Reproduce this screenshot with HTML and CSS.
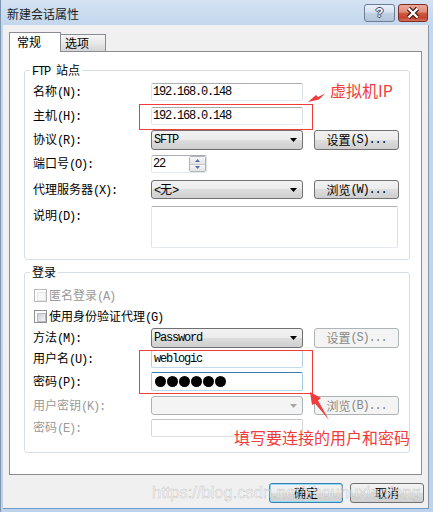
FILE: index.html
```html
<!DOCTYPE html>
<html lang="zh-CN">
<head>
<meta charset="utf-8">
<title>新建会话属性</title>
<link rel="stylesheet" href="styles.css">
</head>
<body>
<div class="window">
  <header class="titlebar">
    <span class="title">新建会话属性</span>
    <div class="caps">
      <span class="cap help">?</span>
      <span class="cap close"><svg width="28" height="16" viewBox="0 0 28 16"><path d="M9.5 3.5 L18.5 12.5 M18.5 3.5 L9.5 12.5" stroke="#4a1a12" stroke-width="4.6"/><path d="M9.5 3.5 L18.5 12.5 M18.5 3.5 L9.5 12.5" stroke="#fff" stroke-width="2.4"/></svg></span>
    </div>
  </header>
  <main class="client">
    <nav class="tabs">
      <span class="tab active">常规</span>
      <span class="tab">选项</span>
    </nav>
    <section class="panel">
      <div class="group g1">
        <div class="legend"><span class="m">FTP </span>站点</div>
        <div class="row h18 mt6"><span class="lbl">名称<span class="m">(N):</span></span><div class="edit w152"><span class="m">192.168.0.148</span></div></div>
        <div class="row h18 mt6"><span class="lbl">主机<span class="m">(H):</span></span><div class="edit w152"><span class="m">192.168.0.148</span></div></div>
        <div class="row h20 mt5"><span class="lbl">协议<span class="m">(R):</span></span><div class="combo"><span class="m">SFTP</span><svg class="arrow" width="7" height="4" viewBox="0 0 7 4"><path d="M0 0h7L3.5 4z"/></svg></div><span class="btn">设置<span class="m">(S)...</span></span></div>
        <div class="row h18 mt5"><span class="lbl">端口号<span class="m">(O):</span></span><div class="edit spinbox"><span class="m">22</span><span class="spin"><i class="half"><svg width="5" height="3" viewBox="0 0 5 3"><path d="M0 3h5L2.5 0z"/></svg></i><i class="half"><svg width="5" height="3" viewBox="0 0 5 3"><path d="M0 0h5L2.5 3z"/></svg></i></span></div></div>
        <div class="row h19 mt7"><span class="lbl">代理服务器<span class="m">(X):</span></span><div class="combo"><span><span class="m">&lt;</span>无<span class="m">&gt;</span></span><svg class="arrow" width="7" height="4" viewBox="0 0 7 4"><path d="M0 0h7L3.5 4z"/></svg></div><span class="btn">浏览<span class="m">(W)...</span></span></div>
        <div class="row h42 mt7 top"><span class="lbl desc">说明<span class="m">(D):</span></span><div class="edit memo"></div></div>
      </div>
      <div class="group g2">
        <div class="legend">登录</div>
        <div class="row h13 mt10"><span class="cb disabled"></span><span class="cbtext dis">匿名登录<span class="m">(A)</span></span></div>
        <div class="row h13 mt8"><span class="cb"></span><span class="cbtext">使用身份验证代理<span class="m">(G)</span></span></div>
        <div class="row h20 mt5"><span class="lbl">方法<span class="m">(M):</span></span><div class="combo"><span class="m">Password</span><svg class="arrow" width="7" height="4" viewBox="0 0 7 4"><path d="M0 0h7L3.5 4z"/></svg></div><span class="btn disabled">设置<span class="m">(S)...</span></span></div>
        <div class="row h18 mt2"><span class="lbl">用户名<span class="m">(U):</span></span><div class="edit w152 hover"><span class="m">weblogic</span></div></div>
        <div class="row h19 mt4"><span class="lbl">密码<span class="m">(P):</span></span><div class="edit w152 focus"><span class="dots"><i></i><i></i><i></i><i></i><i></i><i></i></span></div></div>
        <div class="row h19 mt5"><span class="lbl dis">用户密钥<span class="m">(K):</span></span><div class="combo disabled"><span></span><svg class="arrow" width="7" height="4" viewBox="0 0 7 4"><path d="M0 0h7L3.5 4z"/></svg></div><span class="btn disabled">浏览<span class="m">(B)...</span></span></div>
        <div class="row h18 mt4"><span class="lbl dis">密码<span class="m">(E):</span></span><div class="edit w152 disabled"></div></div>
      </div>
    </section>
    <footer class="actions">
      <span class="dbtn default">确定</span>
      <span class="dbtn">取消</span>
    </footer>
  </main>
  <svg class="anno" width="433" height="512" viewBox="0 0 433 512">
    <rect x="139.5" y="104.5" width="173" height="25" fill="none" stroke="#f03c3c" stroke-width="1"/>
    <rect x="139.5" y="350.5" width="173" height="43" fill="none" stroke="#f03c3c" stroke-width="1"/>
    <polygon points="308,102 316,95 318,97 325,93.5 319,99.5" fill="#f03c3c"/>
    <polygon points="310,392 321,398 318,400.5 329,420 315,403.5 312,405" fill="#f03c3c"/>
  </svg>
  <div class="note n1">虚拟机IP</div>
  <div class="note n2">填写要连接的用户和密码</div>
  <div class="wm">https://blog.csdn.net/zhouhuxiaofeng</div>
</div>
</body>
</html>
```

FILE: styles.css
```css
* { box-sizing: border-box; margin: 0; padding: 0; }
html, body { width: 433px; height: 512px; overflow: hidden; }
body {
  font-family: "Noto Sans CJK SC", "Liberation Sans", sans-serif;
  font-size: 12px;
  line-height: 14px;
  color: #000;
  background: #c2d6ec;
}
.m {
  font-family: "Liberation Mono", "Noto Sans CJK SC", monospace;
  font-size: 12px;
  letter-spacing: -1.2px;
}
.window {
  position: relative;
  width: 433px;
  height: 512px;
  display: flex;
  flex-direction: column;
  box-shadow: inset 1px 0 0 #7f95b0;
  background: linear-gradient(180deg, #d5e3f3 0, #c3d7ed 24px, #bed3eb 100%);
}
/* title bar */
.titlebar {
  flex: none;
  height: 25px;
  display: flex;
  justify-content: space-between;
  align-items: flex-start;
  padding: 4px 5px 0 7px;
}
.title { margin-top: 3px; color: #1b1b1b; font-size: 12px; line-height: 14px; }
.caps { display: flex; gap: 3px; }
.cap {
  height: 18px;
  border-radius: 3px;
  display: flex;
  align-items: center;
  justify-content: center;
}
.help {
  width: 31px;
  border: 1px solid #6b7d95;
  background: linear-gradient(#eaf0f8 0, #d7e2ef 45%, #c3d2e4 50%, #b3c5dc 100%);
  color: #fff;
  font: bold 13px/16px "Liberation Sans", sans-serif;
  text-shadow: 1px 0 #34455f, -1px 0 #34455f, 0 1px #34455f, 0 -1px #34455f;
}
.close {
  width: 30px;
  border: 1px solid #7b2e22;
  background: linear-gradient(#eba99b 0, #e18b78 45%, #cf5a43 50%, #c6432e 80%, #d5725e 100%);
}
/* client */
.client {
  flex: none;
  height: 484px;
  margin: 0 4px 3px 3px;
  background: #f0f0f0;
  border-right: 1px solid #8597ad;
  border-bottom: 1px solid #6f9dcb;
  padding: 7px 6px 5px 6px;
  display: flex;
  flex-direction: column;
}
.tabs { flex: none; height: 19px; display: flex; align-items: flex-end; }
.tab {
  width: 45px;
  height: 17px;
  border: 1px solid #898c95;
  border-left: none;
  border-bottom: none;
  padding-left: 4px;
  line-height: 16px;
  background: linear-gradient(#f6f6f6, #e6e6e6 55%, #d5d5d5);
}
.tab.active {
  width: 52px;
  height: 20px;
  margin-bottom: -1px;
  border-left: 1px solid #898c95;
  padding-left: 7px;
  line-height: 17px;
  background: #fff;
  position: relative;
  z-index: 1;
}
.panel {
  flex: none;
  height: 424px;
  border: 1px solid #898c95;
  background: #fff;
  padding: 18px 11px 0 14px;
}
.group {
  border: 1px solid #d5dfe5;
  border-radius: 3px;
  padding-left: 8px;
  display: flex;
  flex-direction: column;
}
.g1 { padding-bottom: 11px; }
.g2 { margin-top: 12px; padding-bottom: 15px; }
.legend {
  align-self: flex-start;
  height: 14px;
  line-height: 14px;
  margin: -8px 0 0 -3px;
  padding: 0 2px;
  background: #fff;
}
.row { display: flex; align-items: center; flex: none; }
.row.top { align-items: flex-start; }
.h13 { height: 13px; } .h18 { height: 18px; } .h19 { height: 19px; } .h20 { height: 20px; } .h42 { height: 42px; }
.mt2 { margin-top: 2px; } .mt4 { margin-top: 4px; } .mt5 { margin-top: 5px; } .mt6 { margin-top: 6px; }
.mt7 { margin-top: 7px; } .mt8 { margin-top: 8px; } .mt10 { margin-top: 10px; }
.lbl { width: 118px; flex: none; line-height: 14px; white-space: nowrap; }
.lbl.desc { margin-top: 2px; }
.dis { color: #9a9a9a; }
/* controls */
.edit {
  height: 100%;
  background: #fff;
  border: 1px solid;
  border-color: #abadb3 #dbdfe6 #e3e9ef #e2e3ea;
  border-radius: 2px;
  padding-left: 1px;
  display: flex;
  align-items: center;
  white-space: nowrap;
}
.w152 { width: 152px; }
.edit.hover { border-color: #8fb6d8 #b4cfe6 #c2dbee #b4cfe6; padding-left: 2px; }
.edit.focus { border-color: #3d7bad #a4c9e3 #b7d9ed #a4c9e3; padding-left: 3px; }
.edit.disabled { border-color: #c4c4c4 #d6d6d6 #dedede #d6d6d6; }
.spinbox { width: 56px; justify-content: space-between; }
.spin {
  width: 17px;
  height: 16px;
  border: 1px solid #b0b4ba;
  border-radius: 2px;
  display: flex;
  flex-direction: column;
  overflow: hidden;
}
.half {
  flex: 1;
  display: flex;
  align-items: center;
  justify-content: center;
  background: linear-gradient(#f6f6f6, #e4e4e4);
}
.half + .half { border-top: 1px solid #c6c9ce; }
.half svg { fill: #4e6fa8; display: block; }
.memo { width: 247px; height: 42px; }
.combo {
  width: 152px;
  height: 100%;
  border: 1px solid #707070;
  border-radius: 3px;
  background: linear-gradient(#f2f2f2 0, #ebebeb 50%, #dddddd 50%, #cfcfcf 100%);
  padding-left: 2px;
  display: flex;
  align-items: center;
  white-space: nowrap;
}
.arrow { margin-left: auto; margin-right: 5px; fill: #000; display: block; flex: none; }
.combo.disabled { border-color: #adb2b5; background: #f4f4f4; }
.combo.disabled .arrow { fill: #a8a8a8; }
.btn {
  width: 85px;
  height: 100%;
  margin-left: 11px;
  border: 1px solid #707070;
  border-radius: 3px;
  background: linear-gradient(#f2f2f2 0, #ebebeb 50%, #dddddd 50%, #cfcfcf 100%);
  display: flex;
  align-items: center;
  justify-content: center;
  white-space: nowrap;
}
.btn.disabled { border-color: #adb2b5; background: #f4f4f4; color: #888; }
.dots { display: flex; gap: 1px; }
.dots i { width: 11px; height: 11px; border-radius: 50%; background: #000; display: block; }
.cb {
  width: 13px;
  height: 13px;
  flex: none;
  margin-left: 1px;
  border: 1px solid #8e8f8f;
  background: #fff;
  padding: 2px;
}
.cb::before {
  content: "";
  display: block;
  width: 7px;
  height: 7px;
  border: 1px solid #b7babf;
  background: linear-gradient(135deg, #cdd0d5, #f4f5f6);
}
.cb.disabled { border-color: #b8b8b8; }
.cb.disabled::before { border-color: #e6e6e6; background: #f7f7f7; }
.cbtext { margin-left: 2px; line-height: 14px; white-space: nowrap; }
/* dialog buttons */
.actions {
  flex: none;
  height: 20px;
  margin: 8px -2px 0 0;
  display: flex;
  justify-content: flex-end;
  gap: 7px;
}
.dbtn {
  width: 74px;
  height: 20px;
  border: 1px solid #707070;
  border-radius: 3px;
  background: linear-gradient(#f2f2f2 0, #ebebeb 50%, #dddddd 50%, #cfcfcf 100%);
  display: flex;
  align-items: center;
  justify-content: center;
}
.dbtn.default {
  border-color: #3c7fb1;
  box-shadow: inset 0 0 0 1px #8fdcf8;
}
/* annotations */
.anno { position: absolute; left: 0; top: 0; pointer-events: none; }
.note {
  position: absolute;
  color: #f03c3c;
  font-size: 16px;
  line-height: 18px;
  white-space: nowrap;
}
.n1 { left: 330px; top: 81px; }
.n2 { left: 234px; top: 428px; }
.wm {
  position: absolute;
  left: 152px;
  top: 482px;
  font-family: "Liberation Sans", sans-serif;
  font-size: 16.5px;
  line-height: 20px;
  color: rgba(255, 255, 255, 0.55);
  -webkit-text-stroke: 0.4px rgba(130, 130, 130, 0.5);
  white-space: nowrap;
}
```
